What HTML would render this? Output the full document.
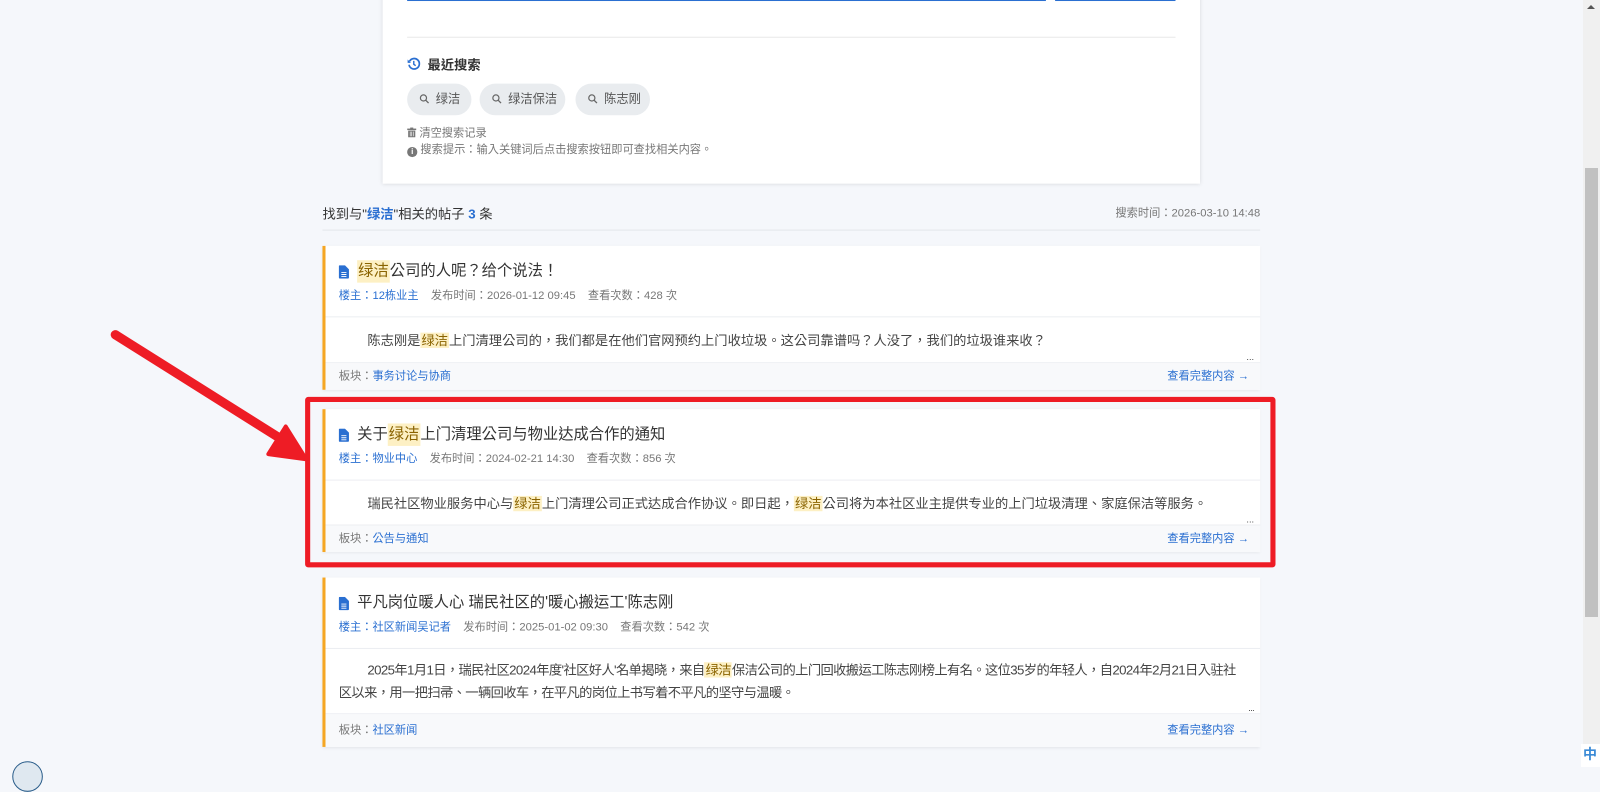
<!DOCTYPE html>
<html><head><meta charset="utf-8"><style>
*{box-sizing:border-box;margin:0;padding:0}
body{width:1600px;height:767px;overflow:hidden;background:#f5f7fb;font-family:"Liberation Sans","Noto Sans CJK TC",sans-serif;color:#333;position:relative}
.abs{position:absolute}
#w{position:absolute;left:0;top:0;width:1568px;height:752px;transform:scale(1.0204);transform-origin:0 0}
.panel{left:375px;top:-10px;width:801px;height:190px;background:#fff;box-shadow:0 1px 4px rgba(0,0,0,.12)}
.chip{position:absolute;top:82px;height:31px;border-radius:16px;background:#e9ecef;font-size:12px;color:#555;line-height:31px;padding-left:28px}
.chip svg{position:absolute;left:12px;top:10px}
.card{position:absolute;left:316px;width:919px;background:#fff;border-left:3px solid #f5a623;box-shadow:0 1px 3px rgba(0,0,0,.08)}
.hd{padding:14px 0 0 13px;height:70px;border-bottom:1px solid #eceef2}
.tt{font-size:15px;color:#333;height:22px;line-height:22px;display:flex;align-items:center;white-space:pre}
.tt svg{margin-right:8px}
.hl{background:#fdf0c4;color:#8a6300;padding:0 1px}
.meta{font-size:11px;color:#777;margin-top:6px;line-height:14px}
.meta .b{color:#2a6fd1;margin-right:12px}
.meta .s{margin-right:12px}
.bd{position:relative;padding:12px 13px 0 13px;font-size:13px;color:#444;line-height:22px;text-indent:28px;border-bottom:1px solid #eceef2}
.dots{position:absolute;right:6px;bottom:1px;font-size:9px;line-height:8px;text-indent:0}
.ft{height:26px;background:#f8f9fb;font-size:11px;color:#777;line-height:26px;padding-left:13px;position:relative}
.ft a{color:#2a6fd1;text-decoration:none}
.more{position:absolute;right:11px;top:0;color:#2a6fd1}
</style></head><body>
<div id="w">
<div class="abs panel">
 <div class="abs" style="left:24px;top:9px;width:626px;height:2px;background:#2a6fd1"></div>
 <div class="abs" style="left:659px;top:9px;width:118px;height:2px;background:#2a6fd1"></div>
 <div class="abs" style="left:24px;top:46px;width:753px;height:1px;background:#e8e8e8"></div>
 <div class="abs" style="left:24px;top:63px;font-size:13px;font-weight:bold;color:#333;display:flex;align-items:center">
  <svg width="13" height="13" viewBox="0 0 14 14"><path d="M2.5 4.5A5.5 5.5 0 1 1 2 8" fill="none" stroke="#2a6fd1" stroke-width="1.8"/><path d="M0.5 2.5v3.5h3.5z" fill="#2a6fd1"/><path d="M7 4v3.5l2 1.5" fill="none" stroke="#2a6fd1" stroke-width="1.5"/></svg>
  <span style="margin-left:7px">最近搜索</span></div>
</div>
<div class="chip" style="left:399px;width:63px"><svg width="10" height="10" viewBox="0 0 10 10"><circle cx="4" cy="4" r="3" fill="none" stroke="#666" stroke-width="1.2"/><path d="M6.3 6.3L9 9" stroke="#666" stroke-width="1.3"/></svg>绿洁</div>
<div class="chip" style="left:470px;width:84px"><svg width="10" height="10" viewBox="0 0 10 10"><circle cx="4" cy="4" r="3" fill="none" stroke="#666" stroke-width="1.2"/><path d="M6.3 6.3L9 9" stroke="#666" stroke-width="1.3"/></svg>绿洁保洁</div>
<div class="chip" style="left:564px;width:73px"><svg width="10" height="10" viewBox="0 0 10 10"><circle cx="4" cy="4" r="3" fill="none" stroke="#666" stroke-width="1.2"/><path d="M6.3 6.3L9 9" stroke="#666" stroke-width="1.3"/></svg>陈志刚</div>
<div class="abs" style="left:399px;top:123px;font-size:11px;color:#777;line-height:16px">
 <div><svg width="9" height="10" viewBox="0 0 9 10" style="margin-right:3px;vertical-align:-1px"><rect x="0" y="1" width="9" height="1.5" fill="#777"/><rect x="3" y="0" width="3" height="1.5" fill="#777"/><path d="M1 3h7v6.5H1z" fill="#777"/><path d="M3 4v4.5M4.5 4v4.5M6 4v4.5" stroke="#fff" stroke-width=".6"/></svg>清空搜索记录</div>
 <div><span style="display:inline-block;width:10px;height:10px;border-radius:50%;background:#777;color:#fff;font-size:8px;line-height:10px;text-align:center;font-weight:bold;margin-right:3px;vertical-align:-1px">i</span>搜索提示：输入关键词后点击搜索按钮即可查找相关内容。</div>
</div>
<div class="abs" style="left:316px;top:199px;font-size:13px;color:#333">找到与"<b style="color:#2a6fd1">绿洁</b>"相关的帖子 <b style="color:#2a6fd1">3</b> 条</div>
<div class="abs" style="left:1000px;width:235px;text-align:right;top:200px;font-size:11px;color:#777">搜索时间：2026-03-10 14:48</div>
<div class="abs" style="left:316px;top:225px;width:919px;height:1px;background:#e4e6ea"></div>

<div class="card" style="top:241px">
 <div class="hd"><div class="tt"><svg width="10" height="13" viewBox="0 0 10 13"><path d="M0 1a1 1 0 0 1 1-1h5l4 4v8a1 1 0 0 1-1 1H1a1 1 0 0 1-1-1z" fill="#2a6fd1"/><path d="M2.5 7h5M2.5 9h5M2.5 11h5" stroke="#fff" stroke-width=".9"/></svg><span class="hl">绿洁</span>公司的人呢？给个说法！</div>
 <div class="meta"><span class="b">楼主：12栋业主</span><span class="s">发布时间：2026-01-12 09:45</span>查看次数：428 次</div></div>
 <div class="bd" style="height:45px">陈志刚是<span class="hl">绿洁</span>上门清理公司的，我们都是在他们官网预约上门收垃圾。这公司靠谱吗？人没了，我们的垃圾谁来收？<span class="dots">...</span></div>
 <div class="ft">板块：<a>事务讨论与协商</a><span class="more">查看完整内容 →</span></div>
</div>

<div class="card" style="top:401px">
 <div class="hd"><div class="tt"><svg width="10" height="13" viewBox="0 0 10 13"><path d="M0 1a1 1 0 0 1 1-1h5l4 4v8a1 1 0 0 1-1 1H1a1 1 0 0 1-1-1z" fill="#2a6fd1"/><path d="M2.5 7h5M2.5 9h5M2.5 11h5" stroke="#fff" stroke-width=".9"/></svg>关于<span class="hl">绿洁</span>上门清理公司与物业达成合作的通知</div>
 <div class="meta"><span class="b">楼主：物业中心</span><span class="s">发布时间：2024-02-21 14:30</span>查看次数：856 次</div></div>
 <div class="bd" style="height:44px">瑞民社区物业服务中心与<span class="hl">绿洁</span>上门清理公司正式达成合作协议。即日起，<span class="hl">绿洁</span>公司将为本社区业主提供专业的上门垃圾清理、家庭保洁等服务。<span class="dots">...</span></div>
 <div class="ft">板块：<a>公告与通知</a><span class="more">查看完整内容 →</span></div>
</div>

<div class="card" style="top:566px">
 <div class="hd"><div class="tt"><svg width="10" height="13" viewBox="0 0 10 13"><path d="M0 1a1 1 0 0 1 1-1h5l4 4v8a1 1 0 0 1-1 1H1a1 1 0 0 1-1-1z" fill="#2a6fd1"/><path d="M2.5 7h5M2.5 9h5M2.5 11h5" stroke="#fff" stroke-width=".9"/></svg>平凡岗位暖人心 瑞民社区的'暖心搬运工'陈志刚</div>
 <div class="meta"><span class="b">楼主：社区新闻吴记者</span><span class="s">发布时间：2025-01-02 09:30</span>查看次数：542 次</div></div>
 <div class="bd" style="height:64px;padding-top:10px;white-space:nowrap;overflow:hidden;letter-spacing:-0.6px">2025年1月1日，瑞民社区2024年度'社区好人'名单揭晓，来自<span class="hl">绿洁</span>保洁公司的上门回收搬运工陈志刚榜上有名。这位35岁的年轻人，自2024年2月21日入驻社<br>区以来，用一把扫帚、一辆回收车，在平凡的岗位上书写着不平凡的坚守与温暖。<span class="dots">...</span></div>
 <div class="ft" style="height:32px;line-height:32px">板块：<a>社区新闻</a><span class="more">查看完整内容 →</span></div>
</div>

<div class="abs" style="left:299px;top:389px;width:951px;height:167px;border:5px solid #ee1c25;border-radius:3px"></div>
<svg class="abs" style="left:100px;top:315px" width="210" height="140" viewBox="0 0 210 140"><path d="M13 13L180 118" stroke="#ee1c25" stroke-width="9" stroke-linecap="round"/><path d="M200 135L163 130L180 103Z" fill="#ee1c25" stroke="#ee1c25" stroke-width="4" stroke-linejoin="round"/></svg>
<div class="abs" style="left:12px;top:746px;width:30px;height:30px;border-radius:50%;border:1px solid #2a5d8a;background:#dfe8f0"></div>
</div>

<div class="abs" style="left:1583px;top:0;width:17px;height:767px;background:#f0f0f0"></div>
<div class="abs" style="left:1585px;top:168px;width:13px;height:449px;background:#c1c1c1"></div>
<div class="abs" style="left:1587px;top:5px;width:0;height:0;border-left:4px solid transparent;border-right:4px solid transparent;border-bottom:4px solid #555"></div>
<div class="abs" style="left:1581px;top:744px;width:19px;height:23px;background:#fff"></div>
<div class="abs" style="left:1583px;top:744px;font-size:14px;font-weight:bold;color:#3a8ad6">中</div>
</body></html>
